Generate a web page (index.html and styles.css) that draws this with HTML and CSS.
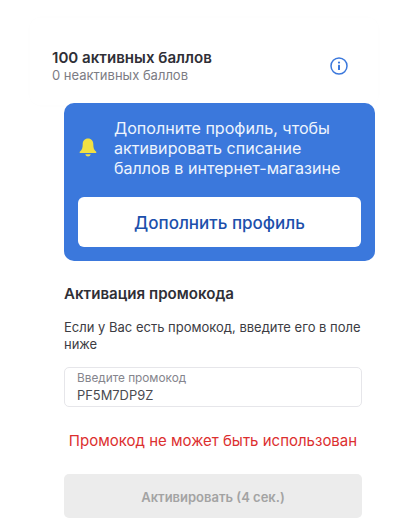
FILE: index.html
```html
<!DOCTYPE html>
<html lang="ru">
<head>
<meta charset="utf-8">
<title>Баллы</title>
<link rel="stylesheet" href="styles.css">
</head>
<body>
<div class="page">
  <section class="points">
    <div class="points-text">
      <div class="points-active">100 активных баллов</div>
      <div class="points-inactive">0 неактивных баллов</div>
    </div>
    <svg class="info" width="18" height="18" viewBox="0 0 18 18" aria-hidden="true">
      <circle cx="9" cy="9" r="8" fill="none" stroke="#3b78dc" stroke-width="1.5"/>
      <circle cx="9" cy="5.6" r="1.1" fill="#3b78dc"/>
      <rect x="8" y="7.8" width="2" height="5.2" rx=".6" fill="#3b78dc"/>
    </svg>
  </section>
  <main class="content">
    <section class="banner">
      <div class="banner-top">
        <svg class="bell" width="18" height="20" viewBox="0 0 18 20" aria-hidden="true">
          <path d="M9 .6c-3.400 0-5.300 2.500-5.300 5.600 0 3.600-.8 5.700-2.700 7.200-.7.600-.4 1.600.5 1.600h15c.9 0 1.200-1 .5-1.600-1.900-1.500-2.700-3.600-2.700-7.200C14.300 3.100 12.400.6 9 .6z" fill="#f1e043"/>
          <path d="M6.300 16.300c.5 1.400 1.500 2.200 2.700 2.200s2.200-.8 2.700-2.200z" fill="#f1e043"/>
        </svg>
        <p class="banner-text">Дополните профиль, чтобы активировать списание баллов в интернет-магазине</p>
      </div>
      <button class="banner-btn" type="button">Дополнить профиль</button>
    </section>
    <section class="promo">
      <h2 class="promo-title">Активация промокода</h2>
      <p class="promo-hint">Если у Вас есть промокод, введите его в поле ниже</p>
      <div class="field">
        <div class="field-label">Введите промокод</div>
        <div class="field-value">PF5M7DP9Z</div>
      </div>
      <p class="promo-error">Промокод не может быть использован</p>
      <button class="promo-btn" type="button" disabled>Активировать (4 сек.)</button>
    </section>
  </main>
</div>
</body>
</html>
```
FILE: styles.css
```css
* { box-sizing: border-box; }
html, body { margin: 0; height: 100%; background: #fff; overflow: hidden; }
body { font-family: Inter, "Liberation Sans", sans-serif; color: #2d2d33; }
.page { height: 529px; overflow: hidden; padding-top: 18px; }

.points {
  margin: 0 35px 0 30px;
  height: 87px;
  padding: 31px 30px 0 22px;
  display: flex;
  justify-content: space-between;
  align-items: flex-start;
  border-radius: 10px;
  box-shadow: 0 0 10px rgba(0, 0, 0, .012);
}
.points-active { font-size: 15.100px; font-weight: 600; line-height: 18px; color: #2f2f36; }
.points-inactive { font-size: 13px; line-height: 17px; color: #7c7c84; }
.info { margin: 8px 0 0; }

.content { margin: -2px 38px 0 64px; }

.banner {
  background: #3b78dc;
  border-radius: 10px;
  height: 158px;
  padding: 14px;
  width: 311px;
}
.banner-top { display: flex; align-items: center; height: 66px; margin-top: -2px; }
.bell { flex: none; margin-right: 17px; margin-left: 1px; }
.banner-text { margin: 0; color: #eef4fd; font-size: 16.100px; line-height: 20px; width: 238px; }
.banner-btn {
  display: block;
  margin: 16px 0 0;
  width: 283px;
  height: 50px;
  background: #fff;
  border: 0;
  border-radius: 6px;
  color: #1c50ac;
  font: 500 17px/50px Inter, "Liberation Sans", sans-serif;
}

.promo { width: 298px; padding-top: 24px; }
.promo-title { margin: 0; font-size: 15.100px; font-weight: 600; line-height: 18px; color: #2f2f36; }
.promo-hint { margin: 16px 0 0; font-size: 13px; line-height: 17px; color: #3c3c43; }
.field {
  margin-top: 14px;
  height: 40px;
  border: 1px solid #e6e6ea;
  border-radius: 5px;
  padding: 3px 12px;
}
.field-label { font-size: 11.800px; line-height: 15px; color: #85858d; }
.field-value { font-size: 12.900px; line-height: 17px; color: #4a4a50; padding-top: 1px; }
.promo-error { margin: 24px 0 0; font-size: 15px; line-height: 20px; color: #dc2f2f; text-align: center; white-space: nowrap; }
.promo-btn {
  display: block;
  margin-top: 23px;
  width: 298px;
  height: 44px;
  border: 0;
  border-radius: 5px;
  background: #ececec;
  color: #a3a3a3;
  font: 600 13px/44px Inter, "Liberation Sans", sans-serif;
}
```
